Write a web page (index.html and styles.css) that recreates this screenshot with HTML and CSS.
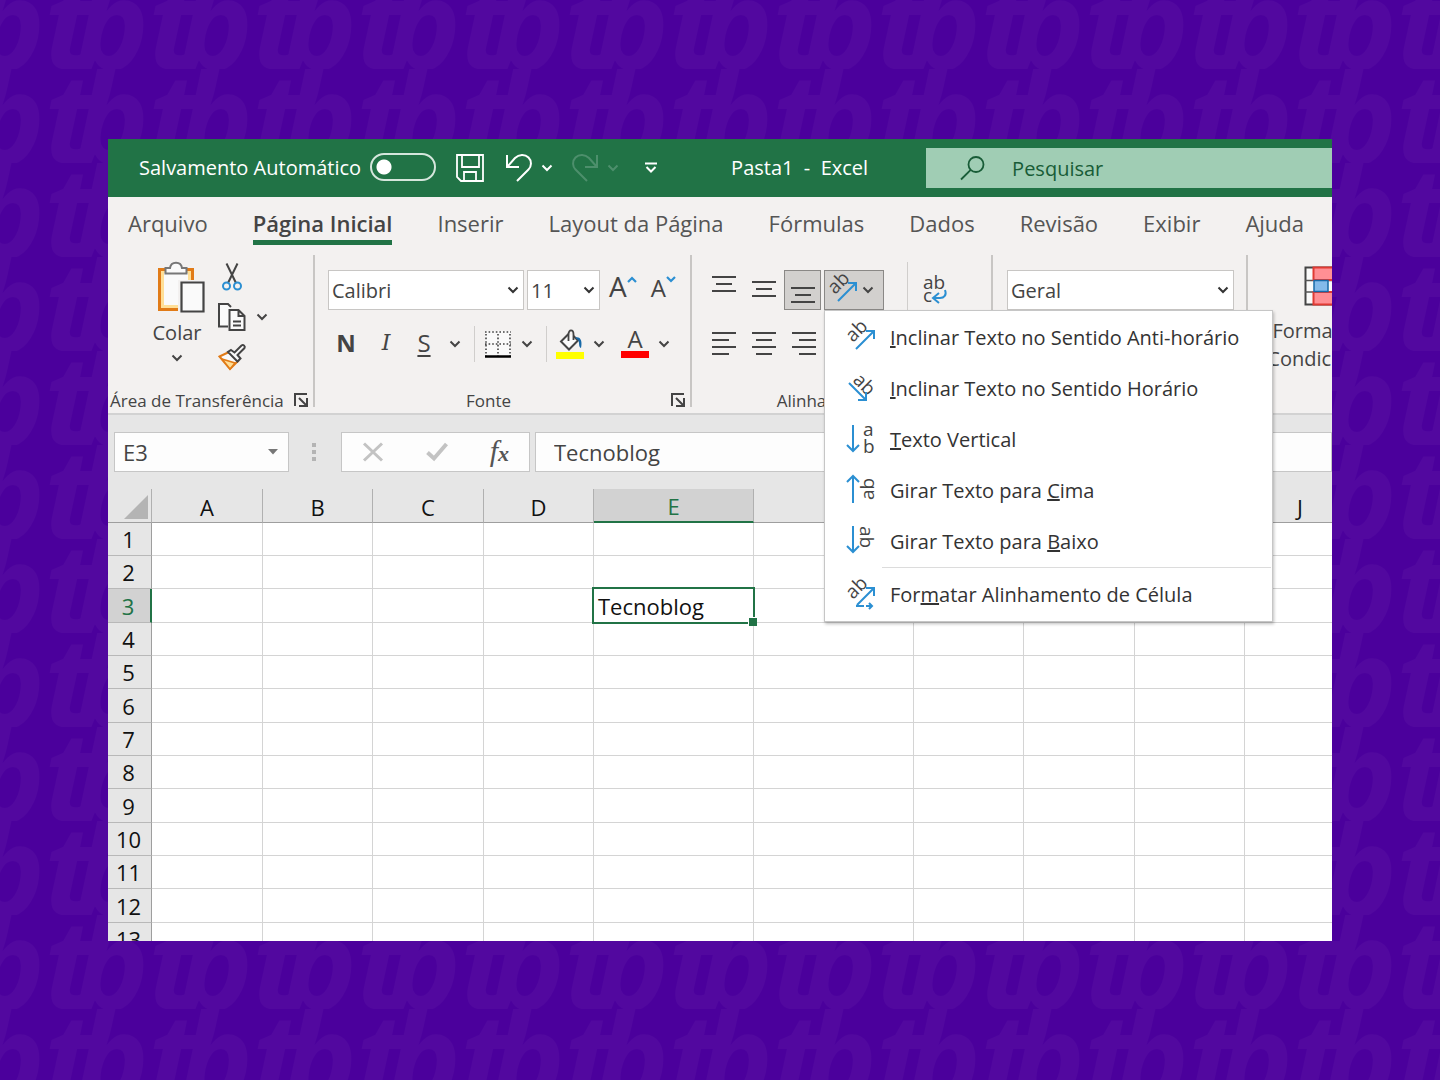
FILE: index.html
```html
<!DOCTYPE html>
<html lang="pt-BR">
<head>
<meta charset="utf-8">
<title>Pasta1 - Excel</title>
<link rel="stylesheet" href="styles.css">
</head>
<body>
<svg class="backdrop" aria-hidden="true">
  <defs>
    <pattern id="tb" width="104" height="94" patternUnits="userSpaceOnUse" x="44" y="69">
      <g class="mark">
        <text x="0" y="94">t</text><text x="31" y="94">b</text>
        <text x="-104" y="94">t</text><text x="-73" y="94">b</text>
        <text x="104" y="94">t</text>
      </g>
    </pattern>
  </defs>
  <rect width="100%" height="100%" fill="url(#tb)"/>
</svg>

<svg class="symbols" aria-hidden="true">
  <symbol id="chevron" viewBox="0 0 12 8"><path d="M1.500 1.500 6 6l4.500-4.500" fill="none" stroke="currentColor" stroke-width="2"/></symbol>
  <symbol id="launcher" viewBox="0 0 16 16"><path d="M2 14V2h12M6 6l7 7M14 6v8H6" fill="none" stroke="currentColor" stroke-width="2"/></symbol>
</svg>

<main class="window">
  <header class="titlebar">
    <label class="autosave"><span>Salvamento Automático</span><input class="switch" type="checkbox" role="switch"></label>
    <button class="bare save" aria-label="Salvar"><svg width="30" height="30" viewBox="0 0 30 30" fill="none" stroke="currentColor" stroke-width="1.800"><path d="M2 2h26v26H6l-4-4zM7 2v12h17V2M9 28v-9h12v9"/></svg></button>
    <button class="bare undo" aria-label="Desfazer"><svg width="28" height="30" viewBox="0 0 28 30" fill="none" stroke="currentColor" stroke-width="2"><path d="M2 2v12h12M2.500 13.500 10 5c4-4 10-4 13.500-.5s3 9 0 12L12 28"/></svg></button>
    <button class="bare more" aria-label="Mais ações de desfazer"><svg width="12" height="8"><use href="#chevron"/></svg></button>
    <button class="bare redo dim" aria-label="Refazer" disabled><svg width="28" height="30" viewBox="0 0 28 30" fill="none" stroke="currentColor" stroke-width="2"><path d="M26 2v12H14M25.500 13.500 18 5c-4-4-10-4-13.500-.5s-3 9 0 12L16 28"/></svg></button>
    <button class="bare more dim" aria-label="Mais ações de refazer" disabled><svg width="12" height="8"><use href="#chevron"/></svg></button>
    <button class="bare quick" aria-label="Personalizar barra"><svg width="14" height="12" viewBox="0 0 14 12" fill="none" stroke="currentColor" stroke-width="2"><path d="M1 1.500h12M2.500 5 7 9.500 11.500 5"/></svg></button>
    <h1 class="title">Pasta1  -  Excel</h1>
    <label class="search">
      <svg width="26" height="26" viewBox="0 0 26 26" fill="none" stroke="currentColor" stroke-width="1.800"><circle cx="16" cy="9.500" r="7.500"/><path d="M10.700 14.800 1 24.500"/></svg>
      <input type="search" placeholder="Pesquisar" aria-label="Pesquisar">
    </label>
  </header>

  <nav class="tabs">
    <a href="#">Arquivo</a>
    <a href="#" class="active" aria-current="page">Página Inicial</a>
    <a href="#">Inserir</a>
    <a href="#">Layout da Página</a>
    <a href="#">Fórmulas</a>
    <a href="#">Dados</a>
    <a href="#">Revisão</a>
    <a href="#">Exibir</a>
    <a href="#">Ajuda</a>
  </nav>

  <section class="ribbon">
    <div class="group clipboard">
      <div class="tools">
        <button class="bare paste">
          <svg width="58" height="54" viewBox="-9 0 58 54">
            <path d="M2.500 8.500h33V48.500h-33z" fill="#ffdf97" stroke="#e17b17" stroke-width="3"/>
            <path d="M7 12h24v32H7z" fill="#fafafa"/>
            <path d="M8.500 12.500V7H13c1-7 11-7 12 0h4.500v5.500z" fill="#fafafa" stroke="#777" stroke-width="2"/>
            <path d="M21 19h27v33H21z" fill="#f3f1f0"/>
            <path d="M24.500 21.500h22v29h-22z" fill="#fafafa" stroke="#444" stroke-width="2.200"/>
          </svg>
          <span>Colar</span>
          <svg width="12" height="8"><use href="#chevron"/></svg>
        </button>
        <div class="clip-stack">
          <button class="bare" aria-label="Recortar"><svg width="28" height="30" viewBox="0 0 28 30" fill="none"><path d="M8.500 1.500 18 21M19.500 1.500 10 21" stroke="#444" stroke-width="2"/><circle cx="8.500" cy="24" r="3.500" stroke="#2b8fd2" stroke-width="2"/><circle cx="19.500" cy="24" r="3.500" stroke="#2b8fd2" stroke-width="2"/></svg></button>
          <button class="bare copy" aria-label="Copiar"><svg width="28" height="30" viewBox="0 0 28 30" fill="#fafafa" stroke="#444" stroke-width="2"><path d="M10 24.500H1V2h9l3 3"/><path d="M11.500 8h9l6 6v14h-15zM20.500 8v6h6M15 19.500h8M15 23.500h8"/></svg><svg class="chev" width="12" height="8"><use href="#chevron"/></svg></button>
          <button class="bare" aria-label="Pincel de formatação"><svg width="28" height="28" viewBox="0 0 28 28"><path d="M1.500 14.500 11 10l9 9-8 8z" fill="#fafafa" stroke="#e17b17" stroke-width="2"/><path d="M4 17l13 4-5 6z" fill="#ffdf97" stroke="#e17b17" stroke-width="1.500"/><path d="m13 8 3.500 2.500 7-7c2-1.500 4 1 3 2.500l-7 7 3 3.500-3 3-9.500-9.500z" fill="#fafafa" stroke="#444" stroke-width="2"/></svg></button>
        </div>
      </div>
      <footer class="caption"><span>Área de Transferência</span><button class="bare" aria-label="Opções da Área de Transferência"><svg width="16" height="16"><use href="#launcher"/></svg></button></footer>
    </div>

    <div class="group font">
      <div class="tools rows">
        <div class="row">
          <span class="combo family"><select aria-label="Fonte"><option>Calibri</option></select><svg width="12" height="8"><use href="#chevron"/></svg></span>
          <span class="combo size"><select aria-label="Tamanho da fonte"><option>11</option></select><svg width="12" height="8"><use href="#chevron"/></svg></span>
          <button class="bare grow" aria-label="Aumentar fonte">A<svg width="10" height="7" viewBox="0 0 10 7" fill="none" stroke="#2b8fd2" stroke-width="2.200"><path d="m1 6 4-4 4 4"/></svg></button>
          <button class="bare shrink" aria-label="Diminuir fonte">A<svg width="10" height="7" viewBox="0 0 10 7" fill="none" stroke="#2b8fd2" stroke-width="2.200"><path d="m1 1 4 4 4-4"/></svg></button>
        </div>
        <div class="row styles">
          <button class="bare letter bold">N</button>
          <button class="bare letter italic">I</button>
          <button class="bare letter under">S</button>
          <button class="bare drop" aria-label="Tipos de sublinhado"><svg width="12" height="8"><use href="#chevron"/></svg></button>
          <i class="rule"></i>
          <button class="bare" aria-label="Bordas"><svg width="28" height="28" viewBox="0 0 28 28" fill="none"><path d="M1 1h26v25H1z" fill="#fafafa"/><path d="M1 2h26M1 14h26M2 4v22M14 4v22M26 4v22" stroke="#444" stroke-width="1.600" stroke-dasharray="1.600 2"/><path d="M1 26.500h26" stroke="#000" stroke-width="2.500"/></svg></button>
          <button class="bare drop" aria-label="Mais bordas"><svg width="12" height="8"><use href="#chevron"/></svg></button>
          <i class="rule"></i>
          <button class="bare" aria-label="Cor de preenchimento"><svg width="28" height="30" viewBox="0 0 28 30"><path d="M12.500 5 5 12.500l8 8 9-9-4.500-4.500" fill="#fafafa" stroke="#444" stroke-width="2"/><path d="M12.500 12V5.500c0-5.500 5-5.500 5 0V11" fill="none" stroke="#444" stroke-width="1.800"/><path d="M19 8.500c6-1.500 7.500 4 6 10.500-3-1-1-6-3-8z" fill="#1769a8"/><path d="M0 23h28v7H0z" fill="#ff0"/></svg></button>
          <button class="bare drop" aria-label="Mais cores de preenchimento"><svg width="12" height="8"><use href="#chevron"/></svg></button>
          <button class="bare letter ink" aria-label="Cor da fonte"><span>A</span></button>
          <button class="bare drop" aria-label="Mais cores da fonte"><svg width="12" height="8"><use href="#chevron"/></svg></button>
        </div>
      </div>
      <footer class="caption"><span>Fonte</span><button class="bare" aria-label="Opções de fonte"><svg width="16" height="16"><use href="#launcher"/></svg></button></footer>
    </div>

    <div class="group align">
      <div class="tools rows">
        <div class="row">
          <button class="bare cell" aria-label="Alinhar em cima"><svg width="26" height="28" viewBox="0 0 26 28" stroke="#444" stroke-width="2"><path d="M1 1h24M5 8h16M1 15h24"/></svg></button>
          <button class="bare cell" aria-label="Alinhar no meio"><svg width="26" height="28" viewBox="0 0 26 28" stroke="#444" stroke-width="2"><path d="M1 6h24M5 13h16M1 20h24"/></svg></button>
          <button class="bare cell on" aria-label="Alinhar embaixo" aria-pressed="true"><svg width="26" height="28" viewBox="0 0 26 28" stroke="#444" stroke-width="2"><path d="M1 12h24M5 19h16M1 26h24"/></svg></button>
          <div class="orient">
            <button class="bare on" aria-label="Orientação" aria-expanded="true">
              <svg width="30" height="30" viewBox="0 0 30 30"><text class="ab" transform="translate(7 20) rotate(-45)">ab</text><path class="arrow" d="M10 26 27 9M20 8h8v8"/></svg>
              <svg width="12" height="8"><use href="#chevron"/></svg>
            </button>
            <div class="menu" role="menu">
              <button role="menuitem"><svg width="30" height="30" viewBox="0 0 30 30"><text class="ab" transform="translate(7 20) rotate(-45)">ab</text><path class="arrow" d="M10 26 27 9M20 8h8v8"/></svg><span><u>I</u>nclinar Texto no Sentido Anti-horário</span></button>
              <button role="menuitem"><svg width="30" height="30" viewBox="0 0 30 30"><text class="ab" transform="translate(6 7) rotate(45)">ab</text><path class="arrow" d="M3 9l17 17M12 26h8v-8"/></svg><span><u>I</u>nclinar Texto no Sentido Horário</span></button>
              <button role="menuitem"><svg width="30" height="30" viewBox="0 0 30 30"><text class="ab" x="17" y="11">a</text><text class="ab" x="17" y="28">b</text><path class="arrow" d="M7 0v26M1 20l6 6 6-6"/></svg><span><u>T</u>exto Vertical</span></button>
              <button role="menuitem"><svg width="30" height="30" viewBox="0 0 30 30"><text class="ab" transform="translate(28 24) rotate(-90)">ab</text><path class="arrow" d="M7 27V0M1 6l6-6 6 6"/></svg><span>Girar Texto para <u>C</u>ima</span></button>
              <button role="menuitem"><svg width="30" height="30" viewBox="0 0 30 30"><text class="ab" transform="translate(14 -1) rotate(90)">ab</text><path class="arrow" d="M7-1v26M1 19l6 6 6-6"/></svg><span>Girar Texto para <u>B</u>aixo</span></button>
              <hr>
              <button role="menuitem"><svg width="30" height="30" viewBox="0 0 30 30"><text class="ab" transform="translate(7 20) rotate(-45)">ab</text><path class="arrow" d="M11 25 27 9M20 8h8v8M10 26h8M20 26h6M23 23l3 3-3 3"/></svg><span>For<u>m</u>atar Alinhamento de Célula</span></button>
            </div>
          </div>
          <i class="rule tall"></i>
          <button class="bare wrap" aria-label="Quebrar texto automaticamente"><svg width="26" height="30" viewBox="0 0 26 30"><text class="ab" x="1" y="14">ab</text><text class="ab" x="1" y="27">c</text><path class="arrow" d="M23 15c2 5-1 8-5 8h-6M17 18l-6 5 6 5"/></svg></button>
        </div>
        <div class="row">
          <button class="bare cell" aria-label="Alinhar à esquerda"><svg width="26" height="24" viewBox="0 0 26 24" stroke="#444" stroke-width="2"><path d="M1 1h24M1 8h17M1 15h24M1 22h17"/></svg></button>
          <button class="bare cell" aria-label="Centralizar"><svg width="26" height="24" viewBox="0 0 26 24" stroke="#444" stroke-width="2"><path d="M1 1h24M5 8h16M1 15h24M5 22h16"/></svg></button>
          <button class="bare cell" aria-label="Alinhar à direita"><svg width="26" height="24" viewBox="0 0 26 24" stroke="#444" stroke-width="2"><path d="M1 1h24M8 8h17M1 15h24M8 22h17"/></svg></button>
        </div>
      </div>
      <footer class="caption"><span>Alinhamento</span><button class="bare" aria-label="Opções de alinhamento"><svg width="16" height="16"><use href="#launcher"/></svg></button></footer>
    </div>

    <div class="group number">
      <div class="tools rows">
        <div class="row"><span class="combo format"><select aria-label="Formato de número"><option>Geral</option></select><svg width="12" height="8"><use href="#chevron"/></svg></span></div>
      </div>
    </div>

    <div class="group looks">
      <button class="bare conditional">
        <svg width="48" height="40" viewBox="0 0 48 40"><path d="M1.500 1.500h45v37h-45z" fill="#fafafa" stroke="#444" stroke-width="2"/><path d="M1 14.500h46M1 26h46" stroke="#555" stroke-width="1.500"/><path d="M9.500 1.500h30v12.500h-30zM9.500 26h30v12.500h-30z" fill="#ff8f94" stroke="#e03a33" stroke-width="2"/><path d="M10 14.500h14v11H10z" fill="#84baea" stroke="#1769a8" stroke-width="1.500"/></svg>
        <span class="lines"><span>Formatação</span><span class="last">Condicional<svg width="12" height="8"><use href="#chevron"/></svg></span></span>
      </button>
    </div>
  </section>

  <section class="formula">
    <label class="namebox"><input value="E3" aria-label="Caixa de nome"><svg width="10" height="6" viewBox="0 0 10 6"><path d="M0 0h10L5 5.500z" fill="#777"/></svg></label>
    <svg class="grip" width="4" height="18" viewBox="0 0 4 18" fill="#b4b4b4"><path d="M0 0h4v4H0zM0 7h4v4H0zM0 14h4v4H0z"/></svg>
    <div class="checks">
      <button class="bare" aria-label="Cancelar"><svg width="22" height="20" viewBox="0 0 22 20" fill="none" stroke="#c3c3c3" stroke-width="3"><path d="M2 1.500 20 18.500M20 1.500 2 18.500"/></svg></button>
      <button class="bare" aria-label="Inserir"><svg width="22" height="20" viewBox="0 0 22 20" fill="none" stroke="#c3c3c3" stroke-width="4"><path d="M1.500 10.500 8 16.500 20.500 2"/></svg></button>
      <button class="bare fx" aria-label="Inserir função"><span>f</span><small>x</small></button>
    </div>
    <input class="content" value="Tecnoblog" aria-label="Barra de fórmulas">
  </section>

  <div class="sheet">
    <table>
      <colgroup><col class="c-head"><col class="c-b"><col class="c-a"><col class="c-b"><col class="c-a"><col class="c-wide"><col class="c-wide"><col class="c-a"><col class="c-b"><col class="c-a"><col class="c-b"></colgroup>
      <thead><tr><td class="corner"><svg width="24" height="24" viewBox="0 0 24 24"><path d="M24 0v24H0z" fill="#b4b4b4"/></svg></td><th>A</th><th>B</th><th>C</th><th>D</th><th class="current">E</th><th>F</th><th>G</th><th>H</th><th>I</th><th>J</th></tr></thead>
      <tbody>
        <tr><th>1</th><td></td><td></td><td></td><td></td><td></td><td></td><td></td><td></td><td></td><td></td></tr>
        <tr><th>2</th><td></td><td></td><td></td><td></td><td></td><td></td><td></td><td></td><td></td><td></td></tr>
        <tr><th class="current">3</th><td></td><td></td><td></td><td></td><td class="selected">Tecnoblog</td><td></td><td></td><td></td><td></td><td></td></tr>
        <tr><th>4</th><td></td><td></td><td></td><td></td><td></td><td></td><td></td><td></td><td></td><td></td></tr>
        <tr><th>5</th><td></td><td></td><td></td><td></td><td></td><td></td><td></td><td></td><td></td><td></td></tr>
        <tr><th>6</th><td></td><td></td><td></td><td></td><td></td><td></td><td></td><td></td><td></td><td></td></tr>
        <tr><th>7</th><td></td><td></td><td></td><td></td><td></td><td></td><td></td><td></td><td></td><td></td></tr>
        <tr><th>8</th><td></td><td></td><td></td><td></td><td></td><td></td><td></td><td></td><td></td><td></td></tr>
        <tr><th>9</th><td></td><td></td><td></td><td></td><td></td><td></td><td></td><td></td><td></td><td></td></tr>
        <tr><th>10</th><td></td><td></td><td></td><td></td><td></td><td></td><td></td><td></td><td></td><td></td></tr>
        <tr><th>11</th><td></td><td></td><td></td><td></td><td></td><td></td><td></td><td></td><td></td><td></td></tr>
        <tr><th>12</th><td></td><td></td><td></td><td></td><td></td><td></td><td></td><td></td><td></td><td></td></tr>
        <tr><th>13</th><td></td><td></td><td></td><td></td><td></td><td></td><td></td><td></td><td></td><td></td></tr>
      </tbody>
    </table>
  </div>
</main>
</body>
</html>
```
FILE: styles.css
```css
*{box-sizing:border-box}
body{
  margin:0;
  min-height:100vh;
  padding:139px 108px;
  display:flex;
  flex-direction:column;
  background:#4b009c;
  font-family:"Open Sans","Noto Sans",sans-serif;
  font-size:20px;
  color:#444;
}
.backdrop{position:fixed;inset:0;width:100%;height:100%;z-index:-1}
.mark{font:italic 700 124px "Open Sans",sans-serif;fill:#52089f}
.symbols{position:absolute;width:0;height:0}
svg{display:block;flex:none;overflow:visible}
input,select,button{font:inherit;color:inherit;margin:0}
.bare{padding:0;border:0;background:none;display:flex;align-items:center;flex:none}
.ab{font:19px "Open Sans",sans-serif;fill:#444}
.arrow{fill:none;stroke:#2b8fd2;stroke-width:2}

.window{
  flex:1;
  display:flex;
  flex-direction:column;
  overflow:hidden;
  background:#fff;
  max-height:calc(100vh - 278px);
}

/* title bar */
.titlebar{
  flex:none;
  display:flex;
  align-items:center;
  height:58px;
  padding-left:31px;
  background:#217346;
  color:#fff;
}
.autosave{display:flex;align-items:center;gap:9px;padding-bottom:2px}
.switch{
  appearance:none;
  width:66px;
  height:28px;
  border:2px solid #d5e6dc;
  border-radius:14px;
  background:radial-gradient(circle at 12px 12px,#fff 7px,transparent 8px);
}
.save{margin-left:19px}
.undo{margin-left:20px}
.redo{margin-left:18px}
.more{margin-left:8px}
.quick{margin-left:25px}
.dim{color:#4d8f6c}
.title{margin:0 0 0 73px;padding-bottom:2px;font-size:20px;font-weight:400;white-space:pre}
.search{
  flex:1;
  display:flex;
  align-items:center;
  gap:26px;
  height:40px;
  margin-left:58px;
  padding-left:34px;
  background:#a0cdb4;
  color:#185c37;
}
.search input{flex:1;min-width:0;border:0;background:none;padding:0;outline:0}
.search input::placeholder{color:#185c37;opacity:1}

/* tabs */
.tabs{
  flex:none;
  display:flex;
  gap:45px;
  height:58px;
  padding-left:20px;
  background:#f3f1f0;
  white-space:nowrap;
}
.tabs a{
  height:48px;
  line-height:52px;
  font-size:22px;
  color:#555;
  text-decoration:none;
}
.tabs .active{border-bottom:5px solid #217346;font-weight:600;color:#444}

/* ribbon */
.ribbon{
  flex:none;
  display:flex;
  position:relative;
  z-index:1;
  height:160px;
  background:#f3f1f0;
  border-bottom:2px solid #d2d2d2;
}
.group{
  flex:none;
  display:flex;
  flex-direction:column;
  height:152px;
  border-right:2px solid #c8c6c4;
}
.tools{flex:1;display:flex}
.rows{flex-direction:column;gap:14px;padding-top:15px}
.row{display:flex;align-items:center;height:40px}
.caption{display:flex;align-items:center;height:24px;margin-bottom:-5px;padding-right:4px;font-size:17px;white-space:nowrap}
.caption span{flex:1;text-align:center}
.caption button{margin-left:8px}
.clipboard{width:207px}
.clipboard .caption{padding-left:2px}
.clipboard .caption span{text-align:left}
.paste{flex-direction:column;width:64px;margin-left:37px;padding-top:6px;gap:4px}
.paste svg:last-child{margin-top:4px}
.clip-stack{display:flex;flex-direction:column;gap:10px;padding-top:7px;margin-left:9px}
.copy .chev{margin-left:10px}

.font{width:377px}
.font .tools{padding-left:13px}
.combo{display:grid;align-items:center;height:40px;background:#fff;border:1px solid #c8c6c4}
.combo select{grid-area:1/1;appearance:none;border:0;background:none;padding:0 3px;height:38px;width:100%}
.combo svg{grid-area:1/1;justify-self:end;margin-right:4px;pointer-events:none;color:#333}
.family{width:196px}
.size{width:73px;margin-left:3px}
.grow,.shrink{align-items:flex-start;height:40px}
.grow{font-size:28px;line-height:32px;margin-left:9px}
.shrink{font-size:24px;line-height:36px;margin-left:14px}
.grow svg,.shrink svg{margin-top:6px}
.styles .bare{justify-content:center;font-size:24px}
.styles .letter{padding-bottom:3px}
.styles .bold{width:36px;font-weight:700}
.styles .italic{width:44px;font-style:italic;font-family:"DejaVu Serif",serif;font-size:22px}
.styles .under{width:32px;text-decoration:underline;text-underline-offset:3px;text-decoration-thickness:2px}
.styles .drop{width:30px}
.rule{width:1px;height:36px;margin:0 9px 0 4px;background:#d0cecc}
.ink{width:28px;margin-left:7px}
.ink span{width:28px;border-bottom:7px solid #f00;line-height:24px}

.align{width:301px}
.align .tools{padding-left:12px}
.cell{width:40px;height:40px;justify-content:center}
.cell.on{width:37px}
.on{background:#d2d0ce;border:1px solid #8a8886}
.orient{position:relative;margin-left:3px}
.orient>.on{width:60px;height:40px;padding-left:3px;gap:4px}
.tall{height:56px;margin:0 14px 0 23px}
.menu{
  position:absolute;
  left:0;
  top:40px;
  width:449px;
  padding:1px 0;
  background:#fff;
  border:1px solid #c6c6c6;
  box-shadow:1px 2px 3px rgba(0,0,0,.25);
}
.menu button{
  display:flex;
  align-items:center;
  gap:14px;
  width:100%;
  height:51px;
  padding:0 0 0 21px;
  border:0;
  background:none;
  white-space:nowrap;
  color:#333;
}
.menu hr{height:1px;margin:0 1px 1px 57px;border:0;background:#dcdcdc}

.number{width:255px}
.number .tools{padding-left:14px}
.format{width:227px}
.looks{width:160px;border:0}
.conditional{flex-direction:column;width:160px;padding-top:11px;gap:11px}
.lines{display:flex;flex-direction:column;align-items:center;line-height:28px}
.last{display:flex;align-items:center}

/* formula bar */
.formula{
  flex:none;
  display:flex;
  align-items:center;
  height:74px;
  padding:0 0 0 6px;
  background:#e6e6e6;
  font-size:22px;
}
.namebox,.checks,.content{height:40px;background:#fdfdfd;border:1px solid #c6c6c6}
.namebox{display:flex;align-items:center;width:175px;padding:0 10px 0 8px}
.namebox input{flex:1;min-width:0;border:0;padding:0;background:none}
.grip{margin:0 25px 0 23px}
.checks{display:flex;justify-content:space-between;align-items:center;width:189px;padding:0 20px}
.fx{font:italic 400 30px "Liberation Serif",serif;color:#555;align-items:baseline;line-height:34px}
.fx small{font-size:22px;font-weight:700}
.content{flex:1;min-width:0;margin-left:5px;padding:0 18px}

/* grid */
.sheet{flex:1;min-height:0;overflow:hidden}
table{table-layout:fixed;width:100%;border-collapse:separate;border-spacing:0;font-size:22px;color:#111}
.c-head{width:44px}
.c-a{width:110px}
.c-b{width:111px}
.c-wide{width:160px}
th,td{height:33px;padding:0;line-height:30px;font-weight:400;border-right:1px solid #d4d4d4;border-bottom:1px solid #d4d4d4}
tbody tr:nth-child(3n)>*{height:34px}
thead>tr>*{height:34px;background:#e6e6e6;border-right-color:#b0b0b0;border-bottom:1px solid #9e9e9e;padding-top:2px}
tbody th{background:#e6e6e6;border-right:1px solid #9e9e9e;border-bottom-color:#b8b8b8;padding-right:2px}
.corner svg{margin:0 3px 0 auto}
thead .current{background:#d2d2d2;color:#217346;border-bottom:2px solid #217346}
tbody .current{background:#d2d2d2;color:#217346;border-right:2px solid #217346}
.selected{position:relative;padding-left:4px}
.selected::before{content:"";position:absolute;inset:-2px;border:2px solid #217346}
.selected::after{content:"";position:absolute;right:-4px;bottom:-4px;width:8px;height:8px;background:#217346;border:1px solid #fff;border-width:1px 0 0 1px}
```
